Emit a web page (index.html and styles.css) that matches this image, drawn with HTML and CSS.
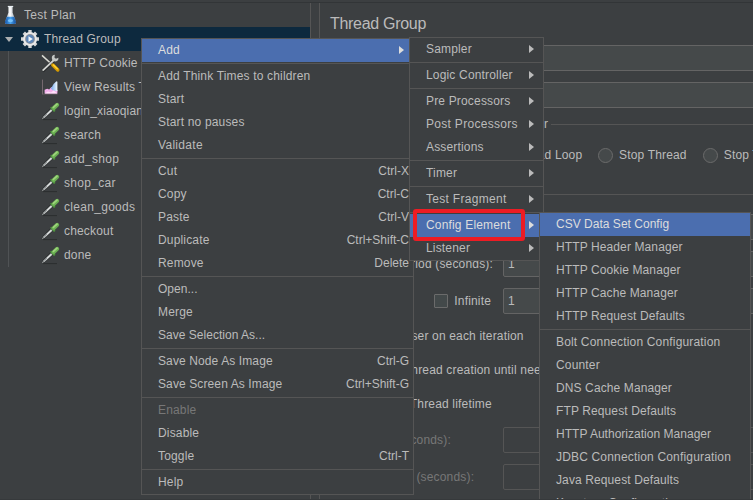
FILE: index.html
```html
<!DOCTYPE html>
<html lang="en">
<head>
<meta charset="utf-8">
<title>Test Plan</title>
<link rel="stylesheet" href="styles.css">
</head>
<body>
<svg width="0" height="0" class="defs">
  <defs>
    <linearGradient id="glass" x1="0" x2="1"><stop offset="0" stop-color="#8f9ba3"/><stop offset=".45" stop-color="#fff"/><stop offset="1" stop-color="#8a98a5"/></linearGradient>
    <linearGradient id="liquid" x1="0" x2="1"><stop offset="0" stop-color="#1555a8"/><stop offset=".5" stop-color="#4aa3ee"/><stop offset="1" stop-color="#134c9b"/></linearGradient>
    <linearGradient id="peak" x1="0" x2="1"><stop offset="0" stop-color="#6fa6ec"/><stop offset="1" stop-color="#f4fbff"/></linearGradient>
  </defs>
  <symbol id="dropper" viewBox="0 0 20 20">
    <path d="M2 18.6h14" stroke="#2c2e2f" stroke-width="1"/>
    <path d="M.6 18.6 1.6 15.4 9.2 7.4 12 10 4.4 17z" fill="#2b2e2f"/>
    <path d="M.8 18.2 2.4 15.6 9.8 8.2 11.5 9.8 4 16.6z" fill="#b9bdbd"/>
    <path d="M5 14.4 10.6 9" stroke="#f2f4f4" stroke-width="1"/>
    <path d="M2.4 16.6 6.4 12.8" stroke="#6b6f70" stroke-width=".9" stroke-dasharray="1 1"/>
    <path d="M10.4 6.8 13.2 9.6" stroke="#4c8f3d" stroke-width="2.2" stroke-linecap="round"/>
    <path d="M12.6 7.2 16.2 3.8" stroke="#6bb053" stroke-width="4" stroke-linecap="round"/>
    <path d="M12.4 6.4 16 3.1" stroke="#9fd47c" stroke-width="1.8" stroke-linecap="round"/>
  </symbol>
</svg>
<div class="app">
  <div class="split">
    <nav class="tree">
      <div class="node root"><svg class="ico" viewBox="0 0 20 20"><path d="M7.4 1.4h4.2v6.4l3.4 9q.6 2.2-1.4 2.2H5.4q-2 0-1.4-2.2L7.4 7.8z" fill="url(#glass)"/><path d="M5.8 11.8h7.4l1.8 5q.5 2.1-1.4 2.1H5.4q-1.9 0-1.4-2.1z" fill="url(#liquid)"/><path d="M6.8 1.5h5.4" stroke="#e7eef2" stroke-width="1.2"/><ellipse cx="9.4" cy="15.6" rx="2.6" ry="1.7" fill="#75c1fa"/></svg><span class="loose">Test Plan</span></div>
      <div class="node group"><i class="twist"></i><svg class="ico" viewBox="0 0 20 20"><g stroke="#d6d6d6" stroke-width="3.4"><path d="M10 1v18M1 10h18M3.8 3.8l12.4 12.4M16.2 3.8 3.8 16.2"/></g><circle cx="10" cy="10" r="7" fill="#e9e9e9"/><circle cx="10" cy="10" r="4.9" fill="#8b9099"/><circle cx="10" cy="10" r="3.9" fill="#5d86b8"/><path d="M8.5 7.3 12.8 10 8.5 12.7z" fill="#f3f7fb"/></svg><span>Thread Group</span></div>
      <div class="children">
        <div class="node"><svg class="ico" viewBox="0 0 20 20"><path d="M1 2.4 11 11.5" stroke="#dcdcd4" stroke-width="1.5"/><path d="M1.6 18 13.8 6.7" stroke="#212324" stroke-width="3.2"/><path d="M1.6 17.6 13.8 6.2" stroke="#d0d2cf" stroke-width="1.9"/><path d="M17.4 4.7A3.3 3.3 0 1 1 13.9 1.8L13.4 4.5 14.9 5.8z" fill="#c4c7c4"/><path d="m11.8 12 5 5" stroke="#d49a00" stroke-width="3.4" stroke-linecap="round"/><path d="m12 11.6 4.8 4.7" stroke="#ffd02e" stroke-width="1.5"/></svg><span>HTTP Cookie Manager</span></div>
        <div class="node"><svg class="ico" viewBox="0 0 20 20"><path d="M1.5 2.6v14.8" stroke="#75696f" stroke-width="1"/><path d="M1.5 17.2h15" stroke="#5a5458" stroke-width="1"/><path d="M3.6 16.6v-3.8l2.6-1 2 .6 2.2-2.4 3 2 3 1v3.6z" fill="#f3b0ec"/><path d="M10 11.4 12.6 7l2.8-2.8 1 .6v9.4L12 13.4z" fill="url(#peak)"/><path d="M3.6 16.6 7 14.6l3 .8 2.6-1.8 3.8 3z" fill="#ffe0fa"/></svg><span>View Results Tree</span></div>
        <div class="node"><svg class="ico"><use href="#dropper"/></svg><span>login_xiaoqiang</span></div>
        <div class="node"><svg class="ico"><use href="#dropper"/></svg><span>search</span></div>
        <div class="node"><svg class="ico"><use href="#dropper"/></svg><span class="loose">add_shop</span></div>
        <div class="node"><svg class="ico"><use href="#dropper"/></svg><span class="loose">shop_car</span></div>
        <div class="node"><svg class="ico"><use href="#dropper"/></svg><span class="loose">clean_goods</span></div>
        <div class="node"><svg class="ico"><use href="#dropper"/></svg><span>checkout</span></div>
        <div class="node"><svg class="ico"><use href="#dropper"/></svg><span>done</span></div>
      </div>
    </nav>
    <main class="editor">
      <h1>Thread Group</h1>
      <div class="field wide"></div>
      <div class="field wide"></div>
      <section class="action">
        <div class="legend"><span>error</span><hr></div>
        <div class="radios"><span class="loop">Start Next Thread Loop</span><i class="radio"></i><span>Stop Thread</span><i class="radio"></i><span>Stop Test</span></div>
      </section>
      <section class="props">
        <div class="row"><label></label><div class="field"></div></div>
        <div class="row"><label>Ramp-up period (seconds):</label><div class="field">1</div></div>
        <div class="row"><label class="check"><i class="box"></i>Infinite</label><div class="field">1</div></div>
        <p class="user">Same user on each iteration</p>
        <p class="delay">Delay Thread creation until needed</p>
        <p class="life">Specify Thread lifetime</p>
        <div class="row off"><label>Duration (seconds):</label><div class="field"></div></div>
        <div class="row off startup"><label>Startup delay (seconds):</label><div class="field"></div></div>
      </section>
    </main>
  </div>

  <div class="menu context">
    <div class="item on"><span>Add</span><b></b></div><hr>
    <div class="item"><span>Add Think Times to children</span></div>
    <div class="item"><span>Start</span></div>
    <div class="item"><span>Start no pauses</span></div>
    <div class="item"><span class="loose">Validate</span></div><hr>
    <div class="item"><span>Cut</span><kbd>Ctrl-X</kbd></div>
    <div class="item"><span>Copy</span><kbd>Ctrl-C</kbd></div>
    <div class="item"><span>Paste</span><kbd>Ctrl-V</kbd></div>
    <div class="item"><span>Duplicate</span><kbd>Ctrl+Shift-C</kbd></div>
    <div class="item"><span>Remove</span><kbd>Delete</kbd></div><hr>
    <div class="item"><span class="tightest">Open...</span></div>
    <div class="item"><span>Merge</span></div>
    <div class="item"><span class="tightest">Save Selection As...</span></div><hr>
    <div class="item"><span class="tight">Save Node As Image</span><kbd>Ctrl-G</kbd></div>
    <div class="item"><span class="tight">Save Screen As Image</span><kbd>Ctrl+Shift-G</kbd></div><hr>
    <div class="item disabled"><span>Enable</span></div>
    <div class="item"><span>Disable</span></div>
    <div class="item"><span>Toggle</span><kbd>Ctrl-T</kbd></div><hr>
    <div class="item"><span>Help</span></div>
  </div>

  <div class="menu add">
    <div class="item"><span>Sampler</span><b></b></div><hr>
    <div class="item"><span>Logic Controller</span><b></b></div><hr>
    <div class="item"><span>Pre Processors</span><b></b></div>
    <div class="item"><span class="loose">Post Processors</span><b></b></div>
    <div class="item"><span>Assertions</span><b></b></div><hr>
    <div class="item"><span>Timer</span><b></b></div><hr>
    <div class="item"><span class="loose">Test Fragment</span><b></b></div><hr>
    <div class="item on"><span>Config Element</span><b></b></div>
    <div class="item"><span>Listener</span><b></b></div>
  </div>

  <div class="menu config">
    <div class="item on"><span class="tightest">CSV Data Set Config</span></div>
    <div class="item"><span class="tight">HTTP Header Manager</span></div>
    <div class="item"><span class="tight">HTTP Cookie Manager</span></div>
    <div class="item"><span class="tight">HTTP Cache Manager</span></div>
    <div class="item"><span class="tight">HTTP Request Defaults</span></div><hr>
    <div class="item"><span>Bolt Connection Configuration</span></div>
    <div class="item"><span>Counter</span></div>
    <div class="item"><span class="tight">DNS Cache Manager</span></div>
    <div class="item"><span class="tight">FTP Request Defaults</span></div>
    <div class="item"><span class="tightest">HTTP Authorization Manager</span></div>
    <div class="item"><span>JDBC Connection Configuration</span></div>
    <div class="item"><span class="tight">Java Request Defaults</span></div>
    <div class="item"><span>Keystore Configuration</span></div>
  </div>
  <div class="highlight"></div>
</div>
</body>
</html>
```
FILE: styles.css
```css
* { box-sizing: border-box; }
body { margin: 0; background: #3c3f41; color: #bbb; font: 12px/23px "Liberation Sans", Arial, sans-serif; letter-spacing: .17px; overflow: hidden; }
.defs { position: absolute; }
.app { position: relative; width: 753px; height: 500px; overflow: hidden; padding-top: 2px; border-bottom: 1px solid #36393b; }
.split { display: flex; height: 497px; border-top: 1px solid #323537; white-space: nowrap; }
.tree { flex: 0 0 311px; border-right: 1px solid #555; overflow: hidden; }
.node { height: 24px; display: flex; align-items: center; gap: 3px; line-height: 24px; }
.ico { width: 20px; height: 20px; flex: none; }
.root { padding-left: 1px; }
.group { background: #0d293e; padding-left: 5px; gap: 4px; }
.twist { border: 4.5px solid transparent; border-top: 5px solid #adb0b2; border-bottom: 0; margin-right: 3px; }
.children { margin-left: 8px; border-left: 1px solid #505355; padding-left: 32px; height: 216px; }
.loose { letter-spacing: .3px; }
.tight { letter-spacing: .11px; }
.tightest { letter-spacing: .02px; }
.editor { flex: 1; margin-left: 8px; border-left: 1px solid #555; min-width: 0; overflow: hidden; }
h1 { font-size: 16px; font-weight: 400; line-height: 22px; margin: 10px 0 10px 10px; letter-spacing: -.3px; }
.field { background: #45494a; border: 1px solid #646464; height: 26px; line-height: 24px; padding-left: 4px; border-radius: 2px; }
.wide { margin: 0 -4px 11px 80px; }
.action { margin-top: -6px; height: 82px; border-bottom: 1px solid #555; padding-left: 202px; }
.legend { display: flex; align-items: center; height: 23px; gap: 2px; }
.legend hr { flex: 1; border: 0; border-top: 1px solid #555; margin: 0; }
.legend span { width: 27px; }
.radios { display: flex; align-items: center; height: 23px; margin-top: 8px; }
.loop { width: 126px; margin-left: -68px; text-align: right; }
.radio { width: 15px; height: 15px; border: 1px solid #6b6b6b; border-radius: 50%; background: #45494a; flex: none; margin: 0 6px 0 16px; }
.loop + .radio { margin-left: 18px; }
.props { padding: 19px 0 0; }
.row { display: flex; height: 37px; }
.row label { width: 174px; padding-right: 1px; text-align: right; margin-right: 9px; line-height: 26px; }
.row .field { flex: 1; margin-right: -4px; }
.row .check { display: flex; justify-content: flex-end; align-items: center; gap: 6px; height: 26px; padding-right: 3px; }
.box { width: 14px; height: 14px; border: 1px solid #6b6b6b; background: #43494a; border-radius: 1px; }
.props p { margin: 0; height: 34px; line-height: 23px; padding-left: 49px; }
.props .life { padding-left: 46px; }
.off { color: #777; }
.off label { text-align: left; padding-left: 23px; }
.startup label { padding-left: 20px; }
.off .field { background: none; border-color: #555; }
.menu { position: absolute; background: #3c3f41; border: 1px solid #555; white-space: nowrap; }
.menu hr { height: 3px; border: 0; margin: 0; background: linear-gradient(#555, #555) 0 1px / 100% 1px no-repeat; }
.item { height: 23px; display: flex; justify-content: space-between; align-items: center; padding: 0 4px 0 16px; }
.item kbd { font: inherit; letter-spacing: 0; }
.item b { border: 4.5px solid transparent; border-left: 5px solid #bbb; border-right: 0; margin-bottom: 1px; }
.on { background: #4b6eaf; color: #ddd; }
.item.on b { border-left-color: #ddd; }
.disabled { color: #777; }
.context { left: 141px; top: 38px; width: 273px; }
.context .item b { margin-right: 5px; }
.add { left: 409px; top: 37px; width: 135px; }
.add .item b { margin-right: 5px; }
.config { left: 539px; top: 212px; width: 212px; }
.highlight { position: absolute; left: 413px; top: 209px; width: 112px; height: 32px; border: 4px solid #ed1c24; border-radius: 3px; }
```
